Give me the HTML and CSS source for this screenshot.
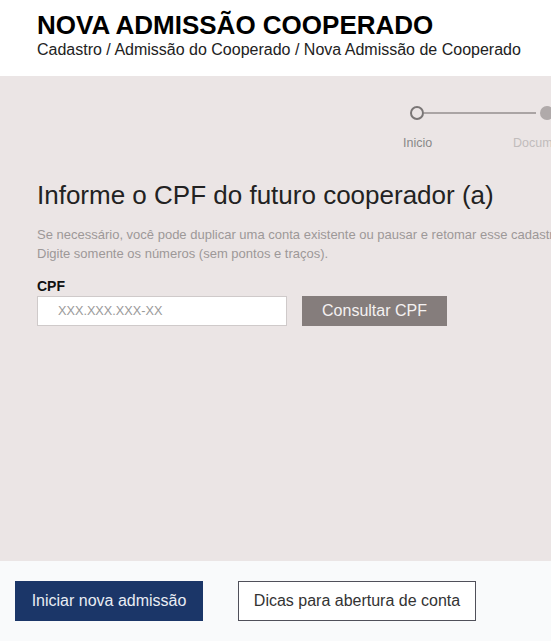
FILE: index.html
```html
<!DOCTYPE html>
<html lang="pt-BR">
<head>
<meta charset="utf-8">
<title>Nova Admissão Cooperado</title>
<link rel="stylesheet" href="styles.css">
</head>
<body>
<header class="page-header">
  <h1 class="title">NOVA ADMISSÃO COOPERADO</h1>
  <div class="breadcrumb">Cadastro / Admissão do Cooperado / Nova Admissão de Cooperado</div>
</header>
<main class="panel">
  <div class="stepper">
    <div class="step step-current">
      <span class="dot"></span>
      <span class="step-label">Inicio</span>
    </div>
    <div class="step step-next">
      <span class="dot"></span>
      <span class="step-label">Documentos</span>
    </div>
  </div>
  <h2 class="heading">Informe o CPF do futuro cooperador (a)</h2>
  <p class="help">Se necessário, você pode duplicar uma conta existente ou pausar e retomar esse cadastro a qualquer momento.<br>Digite somente os números (sem pontos e traços).</p>
  <label class="field-label" for="cpf">CPF</label>
  <div class="field-row">
    <input id="cpf" class="input" type="text" placeholder="XXX.XXX.XXX-XX">
    <button class="btn-consult" type="button">Consultar CPF</button>
  </div>
</main>
<footer class="page-footer">
  <button class="btn btn-primary" type="button">Iniciar nova admissão</button>
  <button class="btn btn-outline" type="button">Dicas para abertura de conta</button>
</footer>
</body>
</html>
```
FILE: styles.css
```css
* { box-sizing: border-box; }
html, body { margin: 0; padding: 0; }
body {
  width: 551px;
  height: 641px;
  overflow: hidden;
  font-family: "Liberation Sans", Arial, sans-serif;
  display: flex;
  flex-direction: column;
  background: #f9fafb;
}
.page-header {
  background: #ffffff;
  height: 76px;
  padding: 11px 0 0 37px;
  flex: none;
}
.title {
  margin: 0;
  font-size: 26px;
  line-height: 29px;
  font-weight: 700;
  color: #000;
}
.breadcrumb {
  font-size: 16px;
  line-height: 19px;
  color: #222;
}
.panel {
  background: #ebe5e5;
  height: 485px;
  flex: none;
  padding: 0 0 0 37px;
  overflow: hidden;
}
.stepper {
  display: flex;
  margin-left: 349px;
  padding-top: 30px;
  height: 104px;
  white-space: nowrap;
}
.step {
  width: 130px;
  flex: none;
  position: relative;
  display: flex;
  flex-direction: column;
  align-items: flex-start;
}
.dot {
  width: 14px;
  height: 14px;
  border-radius: 50%;
  margin-left: 24px;
  position: relative;
  z-index: 1;
}
.step-current .dot {
  border: 2px solid #7a7676;
  background: #ebe5e5;
}
.step-next .dot {
  background: #b0aaaa;
  margin-left: 24px;
}
.step-current::after {
  content: "";
  position: absolute;
  left: 38px;
  right: -20px;
  top: 6px;
  height: 2px;
  background: #aaa4a4;
}
.step-label {
  font-size: 12.5px;
  margin-top: 16px;
  margin-left: 17px;
  color: #888;
}
.step-next .step-label { color: #c1bcbc; margin-left: -3px; }
.heading {
  margin: 0;
  font-size: 26px;
  line-height: 30px;
  font-weight: 400;
  color: #222;
  white-space: nowrap;
}
.help {
  margin: 15px 0 0;
  font-size: 13px;
  line-height: 19px;
  color: #9d9898;
  white-space: nowrap;
}
.field-label {
  display: block;
  margin-top: 15px;
  font-size: 14px;
  line-height: 16px;
  font-weight: 700;
  color: #111;
}
.field-row {
  display: flex;
  gap: 15px;
  margin-top: 2px;
}
.input {
  width: 250px;
  height: 30px;
  border: 1px solid #cfcaca;
  background: #fff;
  padding: 0 0 0 20px;
  font-family: inherit;
  font-size: 12.7px;
  color: #333;
  outline: none;
}
.input::placeholder { color: #9a9a9a; }
.btn-consult {
  width: 145px;
  height: 30px;
  border: none;
  background: #857d7c;
  color: #f4f1f1;
  font-family: inherit;
  font-size: 16px;
  padding: 0;
}
.page-footer {
  flex: 1;
  background: #f9fafb;
  display: flex;
  gap: 35px;
  padding: 20px 0 0 15px;
  align-items: flex-start;
}
.btn {
  height: 40px;
  font-family: inherit;
  font-size: 16px;
  padding: 0;
}
.btn-primary {
  width: 188px;
  background: #1b3668;
  color: #e9edf4;
  border: none;
}
.btn-outline {
  width: 238px;
  background: #fff;
  color: #333;
  border: 1px solid #50505a;
}
```
